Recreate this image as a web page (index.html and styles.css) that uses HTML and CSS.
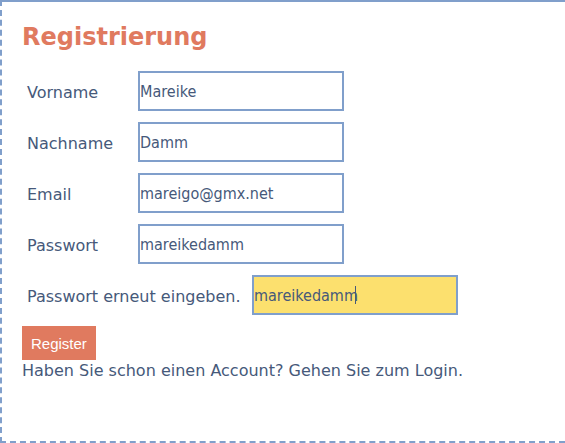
FILE: index.html
```html
<!DOCTYPE html>
<html lang="de">
<head>
<meta charset="utf-8">
<title>Registrierung</title>
<link rel="stylesheet" href="styles.css">
</head>
<body>
<div class="panel">
  <h1 class="title">Registrierung</h1>
  <form class="form">
    <div class="row"><label class="label">Vorname</label><input class="field" type="text" value="Mareike"></div>
    <div class="row"><label class="label">Nachname</label><input class="field" type="text" value="Damm"></div>
    <div class="row"><label class="label">Email</label><input class="field" type="text" value="mareigo@gmx.net"></div>
    <div class="row"><label class="label">Passwort</label><input class="field" type="text" value="mareikedamm"></div>
    <div class="row"><label class="label label-long">Passwort erneut eingeben.</label><span class="field-wrap"><input class="field field-active" type="text" value="mareikedamm"><span class="caret"></span></span></div>
    <button class="btn" type="button">Register</button>
    <p class="note">Haben Sie schon einen Account? Gehen Sie zum Login.</p>
  </form>
</div>
</body>
</html>
```
FILE: styles.css
```css
html, body {
  margin: 0;
  padding: 0;
  background: #ffffff;
}
body {
  width: 565px;
  height: 443px;
  overflow: hidden;
}
.panel {
  box-sizing: border-box;
  width: 565px;
  height: 443px;
  border: 2px dashed #809fcb;
  border-top-style: solid;
  border-right: none;
  padding: 20px 0 0 20px;
  font-family: "DejaVu Sans", Verdana, sans-serif;
  color: #46597a;
}
.title {
  margin: 0 0 19px 0;
  font-size: 24px;
  line-height: 30px;
  font-weight: bold;
  color: #e07a5f;
}
.form {
  display: flex;
  flex-direction: column;
  align-items: flex-start;
}
.row {
  display: flex;
  align-items: center;
  height: 40px;
  margin-bottom: 11px;
}
.label {
  box-sizing: border-box;
  width: 116px;
  padding: 2px 0 0 5px;
  font-size: 16px;
}
.label-long {
  width: 230px;
}
.field {
  box-sizing: border-box;
  width: 206px;
  height: 40px;
  margin: 0;
  padding: 0;
  border: 2px solid #809fcb;
  border-radius: 0;
  background: #ffffff;
  font-family: "DejaVu Sans Condensed", Tahoma, sans-serif;
  font-size: 16px;
  color: #46597a;
  outline: none;
}
.field-active {
  background: #fce06e;
}
.field-wrap {
  position: relative;
  display: block;
}
.caret {
  position: absolute;
  left: 103px;
  top: 11px;
  width: 1px;
  height: 18px;
  background: #46597a;
}
.btn {
  margin: 0;
  padding: 0 9px;
  height: 34px;
  border: none;
  border-radius: 0;
  background: #e07a5f;
  color: #ffffff;
  font-family: "Liberation Sans", Arial, sans-serif;
  font-size: 15px;
}
.note {
  margin: 1px 0 0 0;
  font-size: 16px;
  line-height: 20px;
}
```
